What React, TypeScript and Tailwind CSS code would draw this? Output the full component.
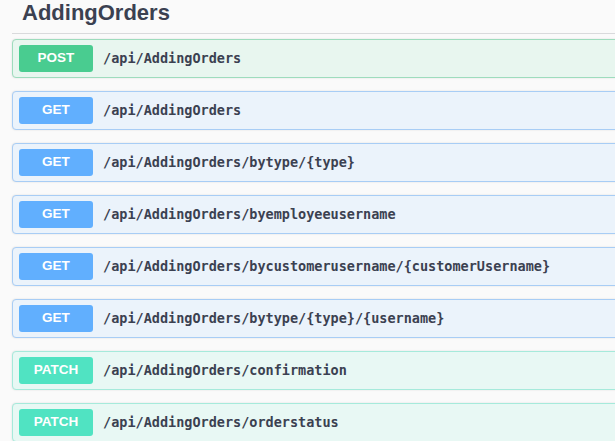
const ops = [
  { method: "POST", path: "/api/AddingOrders" },
  { method: "GET", path: "/api/AddingOrders" },
  { method: "GET", path: "/api/AddingOrders/bytype/{type}" },
  { method: "GET", path: "/api/AddingOrders/byemployeeusername" },
  { method: "GET", path: "/api/AddingOrders/bycustomerusername/{customerUsername}" },
  { method: "GET", path: "/api/AddingOrders/bytype/{type}/{username}" },
  { method: "PATCH", path: "/api/AddingOrders/confirmation" },
  { method: "PATCH", path: "/api/AddingOrders/orderstatus" },
];

const styles: Record<string, { row: string; badge: string }> = {
  POST: {
    row: "bg-[#e8f6ef] border-[#9edcbd]",
    badge: "bg-[#49cc90]",
  },
  GET: {
    row: "bg-[#ebf3fb] border-[#a8cdf5]",
    badge: "bg-[#61affe]",
  },
  PATCH: {
    row: "bg-[#e8f8f4] border-[#a6eadb]",
    badge: "bg-[#50e3c2]",
  },
};

function OpRow({ method, path }: { method: string; path: string }) {
  const s = styles[method];
  return (
    <div
      className={`h-[39px] flex items-center border rounded-[4px] pl-[6px] shadow-[0_0_2px_rgba(0,0,0,0.12)] ${s.row}`}
    >
      <span
        className={`w-[74px] h-[27px] rounded-[3px] flex items-center justify-center text-white text-[13.5px] font-bold ${s.badge}`}
        style={{ fontFamily: '"Liberation Sans", Arial, sans-serif' }}
      >
        {method}
      </span>
      <span
        className="ml-[10px] text-[13.5px] font-bold text-[#3b4151]"
        style={{ fontFamily: '"DejaVu Sans Mono", monospace' }}
      >
        {path}
      </span>
    </div>
  );
}

function App() {
  return (
    <div className="w-[615px] h-[441px] overflow-hidden bg-[#fafafa]">
      <div className="w-[680px] pl-[12px]">
        <div className="border-b border-[#d9dadc] pb-[7px]">
          <h3
            className="pl-[10px] text-[22px] leading-[26px] font-bold text-[#3b4151]"
            style={{ fontFamily: '"Liberation Sans", Arial, sans-serif' }}
          >
            AddingOrders
          </h3>
        </div>
        <div className="flex flex-col gap-[13px] pt-[5px]">
          {ops.map((o, i) => (
            <OpRow key={i} method={o.method} path={o.path} />
          ))}
        </div>
      </div>
    </div>
  );
}

export default App;
